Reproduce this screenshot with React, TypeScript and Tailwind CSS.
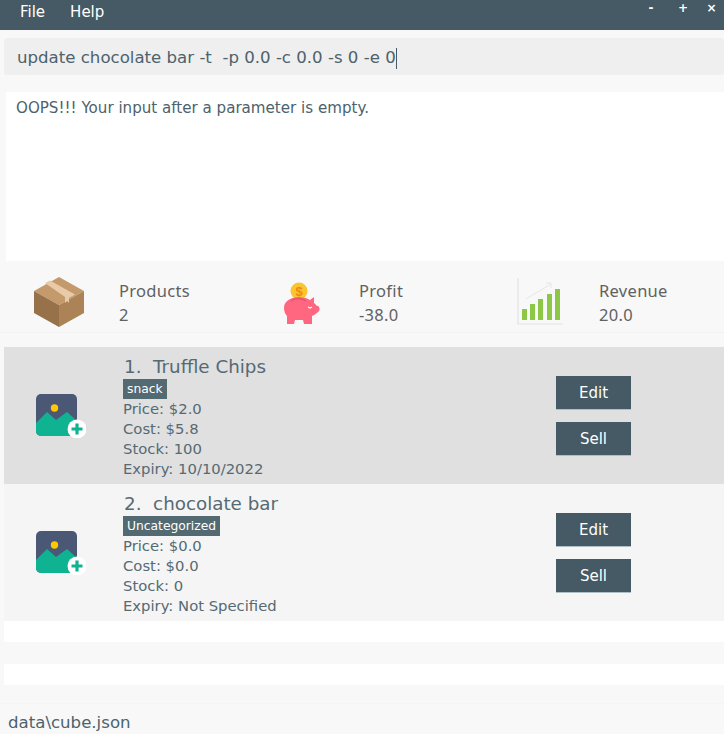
import { type FC, type ReactNode } from "react";

const font = { fontFamily: '"DejaVu Sans", sans-serif' };
const statFont = { fontFamily: '"Noto Sans", sans-serif' };

const BoxIcon: FC = () => (
  <svg width="50" height="50" viewBox="0 0 50 50" className="mr-[2px]">
    <polygon points="25,0 50,14 25,28 0,14" fill="#c49a6c" />
    <polygon points="0,14 25,28 25,50 0,36" fill="#96714a" />
    <polygon points="50,14 25,28 25,50 50,36" fill="#ab8356" />
    <polygon points="11,6 16,3.500 41,17.500 35,21 35,26 33,24 31,26 31,20" fill="#e8c9a8" />
  </svg>
);

const PigIcon: FC = () => (
  <svg width="36" height="42" viewBox="0 0 36 42" className="ml-[4px] mt-[1px]">
    <circle cx="15" cy="9" r="8.500" fill="#fbc531" />
    <text x="15" y="14" fontSize="13" fontWeight="700" textAnchor="middle" fill="#f08a12" fontFamily="Liberation Sans">$</text>
    <path d="M0 26c0-7 7-11 15-11 4 0 8 1 11 3l4-3v6c2 1 2 3 4 3 2 1 2 5 0 6-2 2-4 3-6 4v8h-8l-1-4h-8l-1 4H3v-8c-2-2-3-5-3-8z" fill="#ff6680" />
    <path d="M7 19c4-3 10-3 15 0" stroke="#d94d68" strokeWidth="1" fill="none" />
    <path d="M24 25l2 1 2-1" stroke="#fff" strokeWidth="1.200" fill="none" />
  </svg>
);

const ChartIcon: FC = () => (
  <svg width="46" height="48" viewBox="0 0 46 48">
    <path d="M1 0v46h45" stroke="#e3e3e3" strokeWidth="1.200" fill="none" />
    <path d="M9 21L34 6M29 5h5v5" stroke="#e6e6e6" strokeWidth="1" fill="none" />
    <rect x="5" y="31" width="5" height="11" fill="#8cc747" />
    <rect x="13" y="26" width="5" height="16" fill="#8cc747" />
    <rect x="21" y="21" width="5" height="21" fill="#8cc747" />
    <rect x="30" y="16" width="5" height="26" fill="#8cc747" />
    <rect x="38" y="11" width="5" height="31" fill="#8cc747" />
  </svg>
);

const ImageAddIcon: FC = () => (
  <svg width="50" height="44" viewBox="0 0 50 44" className="mr-[2px]">
    <rect x="0" y="0" width="41" height="42" rx="5" fill="#4a5875" />
    <circle cx="18.500" cy="14" r="3.700" fill="#ffc800" />
    <path d="M0 29L11 18l9 8 11-8 10 9v10a5 5 0 0 1-5 5H5a5 5 0 0 1-5-5z" fill="#0fb392" />
    <circle cx="41" cy="35" r="9.500" fill="#fff" />
    <path d="M41 29.500v11M35.500 35h11" stroke="#0fb392" strokeWidth="3.200" />
  </svg>
);

const Stat: FC<{ label: string; value: string; icon: ReactNode }> = ({ label, value, icon }) => (
  <div className="flex items-center w-[240px] shrink-0">
    <div className="flex justify-center items-center w-[119px]">{icon}</div>
    <div className="text-[16.500px] leading-[24px] text-[#616161] tracking-[0.3px] pt-[1px]" style={statFont}>
      <div>{label}</div>
      <div>{value}</div>
    </div>
  </div>
);

const ProductRow: FC<{
  index: number;
  name: string;
  tag: string;
  price: string;
  cost: string;
  stock: string;
  expiry: string;
  bg: string;
}> = ({ index, name, tag, price, cost, stock, expiry, bg }) => (
  <div className={`flex h-[137px] ${bg}`}>
    <div className="w-[115px] shrink-0 flex justify-center items-center pt-[1px]">
      <ImageAddIcon />
    </div>
    <div className="w-[437px] shrink-0 pl-[4px] text-[#566a73]">
      <div className="text-[18.300px] leading-[24px] mt-[8px] whitespace-pre pl-[1px]">
        {index}.  {name}
      </div>
      <div className="flex">
        <span className="bg-[#546a72] text-white text-[12.300px] leading-[20px] px-[4px]">{tag}</span>
      </div>
      <div className="text-[14.800px] leading-[20px]">
        <div>Price: {price}</div>
        <div>Cost: {cost}</div>
        <div>Stock: {stock}</div>
        <div>Expiry: {expiry}</div>
      </div>
    </div>
    <div className="flex flex-col gap-[12px] pt-[29px]">
      <button className="w-[75px] h-[34px] pt-[1px] bg-[#455a64] text-white text-[15px] border-b border-[#b0bec5]">Edit</button>
      <button className="w-[75px] h-[34px] pt-[1px] bg-[#455a64] text-white text-[15px] border-b border-[#b0bec5]">Sell</button>
    </div>
  </div>
);

const App: FC = () => {
  return (
    <div className="w-[724px] h-[734px] overflow-hidden bg-[#f8f8f8] flex flex-col" style={font}>
      {/* menu bar */}
      <div className="h-[30px] bg-[#455a64] flex justify-between text-white shrink-0">
        <div className="flex text-[15px] leading-[24px] pl-[20px] gap-[25px]">
          <span>File</span>
          <span>Help</span>
        </div>
        <div className="flex text-[12px] font-bold leading-[16px]">
          <span className="w-[32px] text-center">-</span>
          <span className="w-[32px] text-center">+</span>
          <span className="w-[25px] text-center">×</span>
        </div>
      </div>

      {/* command box */}
      <div className="mt-[8px] ml-[4px] h-[37px] pt-[3px] bg-[#efefef] rounded-[3px] flex items-center pl-[13px] text-[#4d626c] text-[16.600px] whitespace-pre shrink-0">
        <span>update chocolate bar -t  -p 0.0 -c 0.0 -s 0 -e 0</span>
        <span className="w-[1px] h-[21px] bg-[#455a64]" />
      </div>

      {/* result */}
      <div className="mt-[17px] ml-[6px] h-[169px] bg-white pl-[10px] pt-[5px] text-[15.100px] leading-[22px] text-[#4d626c] shrink-0">
        OOPS!!! Your input after a parameter is empty.
      </div>

      {/* stats */}
      <div className="mt-[4px] h-[68px] pt-[7px] flex items-center border-b border-[#f2f2f2] shrink-0">
        <Stat label="Products" value="2" icon={<BoxIcon />} />
        <Stat label="Profit" value="-38.0" icon={<PigIcon />} />
        <Stat label="Revenue" value="20.0" icon={<ChartIcon />} />
      </div>

      {/* product list */}
      <div className="mt-[14px] ml-[4px] shrink-0">
        <ProductRow index={1} name="Truffle Chips" tag="snack" price="$2.0" cost="$5.8" stock="100" expiry="10/10/2022" bg="bg-[#e0e0e0]" />
        <ProductRow index={2} name="chocolate bar" tag="Uncategorized" price="$0.0" cost="$0.0" stock="0" expiry="Not Specified" bg="bg-[#f5f5f5]" />
        <div className="h-[21px] bg-white" />
        <div className="h-[22px] bg-[#f8f8f8]" />
        <div className="h-[21px] bg-white" />
      </div>

      {/* status bar */}
      <div className="mt-[18px] flex-1 border-t border-[#f5f5f5] pl-[8px] pt-[8px] text-[16.600px] leading-[22px] text-[#4d626c]">
        data\cube.json
      </div>
    </div>
  );
};

export default App;
